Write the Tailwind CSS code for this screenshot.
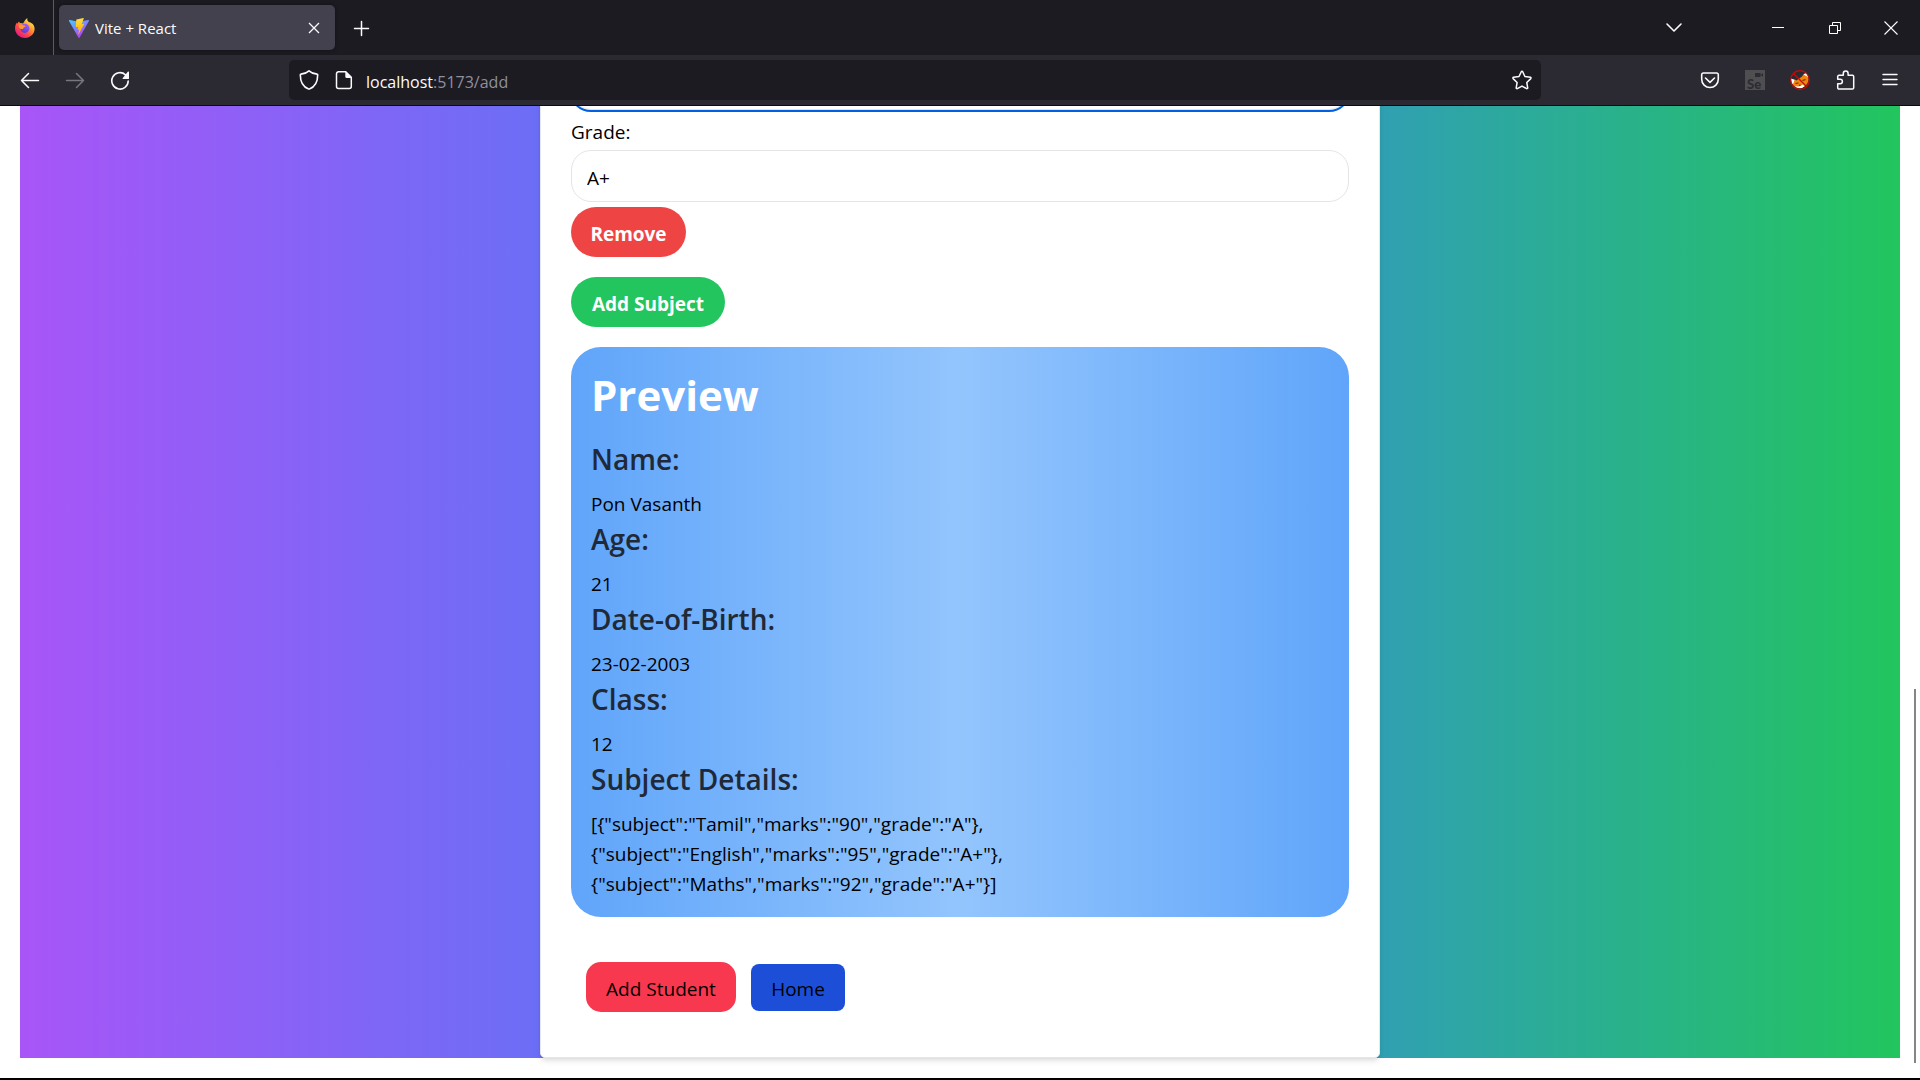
<!DOCTYPE html>
<html lang="en">
<head>
<meta charset="utf-8">
<meta name="viewport" content="width=device-width, initial-scale=1">
<title>Vite + React</title>
<script src="https://cdn.jsdelivr.net/npm/@tailwindcss/browser@4"></script>
</head>
<body class="flex h-screen flex-col overflow-hidden border-b-2 border-black bg-white font-['Open_Sans','Noto_Sans',sans-serif] text-[19px] leading-[30px] text-black">

<!-- Tab strip -->
<header class="shrink-0 text-[#fbfbfe]">
  <div class="flex h-[55px] items-center bg-[#1c1b22]">
    <div class="flex h-full w-[54px] items-center border-r border-[#5b5b66] pl-[15px]">
      <svg class="size-5" viewBox="0 0 20 20" aria-hidden="true">
        <defs>
          <linearGradient id="ffBody" x1="0.85" y1="0.1" x2="0.2" y2="0.95"><stop offset="0" stop-color="#fff44f"/><stop offset=".35" stop-color="#ff9a2a"/><stop offset=".65" stop-color="#ff4a4a"/><stop offset="1" stop-color="#e31587"/></linearGradient>
          <linearGradient id="ffGlobe" x1="0.7" y1="0" x2="0.3" y2="1"><stop offset="0" stop-color="#a45cff"/><stop offset="1" stop-color="#5a3bd0"/></linearGradient>
        </defs>
        <path fill="url(#ffBody)" d="M12.500 0c-.6 1.600-.2 2.600.8 3.600 1.400 1.100 4.500 1.400 5.700 4.400C21.300 14 16.500 20 10 20 4.500 20 0 15.700 0 10.300 0 8 .8 6 2 4.500c.1.600.2 1 .5 1.300.3-1 .8-1.800 1.600-2.400.1.800.5 1.300 1 1.600 1-.2 2.300 0 3 .6C9.500 3 10.500 1 12.500 0z"/>
        <circle cx="9.800" cy="10.300" r="4.600" fill="url(#ffGlobe)"/>
        <path fill="#ff9a2a" d="M4 6.800c2-.8 3.600-.3 4.600.7 1.300 0 1.900.2 1.900.8-.2.700-1.800 1-2.100 1.600-.2 1.300-1.500 1.300-2.600 1.100C4.300 10.500 3.500 8.500 4 6.800z"/>
      </svg>
    </div>
    <div class="ml-[5px] flex h-[45px] w-[276px] items-center rounded-[5px] bg-[#42414d] pr-3 pl-[10px] shadow-[0_0_4px_rgba(0,0,0,0.4)]">
      <svg class="size-5 shrink-0" viewBox="0 0 20 20" aria-hidden="true">
        <defs>
          <linearGradient id="viteV" x1="0" y1="0" x2=".6" y2="1"><stop offset="0" stop-color="#41d1ff"/><stop offset="1" stop-color="#bd34fe"/></linearGradient>
          <linearGradient id="viteBolt" x1=".4" y1="0" x2=".5" y2="1"><stop offset="0" stop-color="#ffea83"/><stop offset=".1" stop-color="#ffdd35"/><stop offset="1" stop-color="#ffa800"/></linearGradient>
        </defs>
        <path fill="url(#viteV)" d="M19.900 3 10.500 19.700a.6.600 0 0 1-1 0L0 3a.6.600 0 0 1 .6-.9l9.400 1.700 9.300-1.700a.6.600 0 0 1 .6.900z"/>
        <path fill="url(#viteBolt)" d="m14.500 0-6.900 1.400-.3.300-.5 7.200.4.300 2-.4-.6 2.800.4.400 1.200-.4-1 4.500c0 .3.400.5.500.2l5.300-10.100c.1-.3-.1-.5-.4-.4l-2 .4 2.200-5.800z"/>
      </svg>
      <span class="ml-[6px] flex-1 truncate text-[15px]">Vite + React</span>
      <button type="button" aria-label="Close tab" class="size-[18px]">
        <svg class="size-[18px]" viewBox="0 0 18 18" fill="none" stroke="currentColor" stroke-width="1.300"><path d="m4 4 10 10M14 4 4 14"/></svg>
      </button>
    </div>
    <button type="button" aria-label="New tab" class="ml-4 size-5">
      <svg class="size-5" viewBox="0 0 20 20" fill="none" stroke="currentColor" stroke-width="1.500" stroke-linecap="round"><path d="M10.500 3.500v14M3.500 10.500h14"/></svg>
    </button>
    <div class="ml-auto flex items-center">
      <button type="button" aria-label="List all tabs" class="mr-[84px] size-5">
        <svg class="size-5" viewBox="0 0 20 20" fill="none" stroke="currentColor" stroke-width="1.600" stroke-linecap="round" stroke-linejoin="round"><path d="m3 6 7 7 7-7"/></svg>
      </button>
      <button type="button" aria-label="Minimize" class="mr-[37px] size-5">
        <svg class="size-5" viewBox="0 0 20 20" stroke="#fff" stroke-width="1"><path d="M4 9.500h12"/></svg>
      </button>
      <button type="button" aria-label="Restore" class="mr-[36px] size-5">
        <svg class="size-5" viewBox="0 0 20 20" fill="none" stroke="#fff" stroke-width="1"><path d="M4.500 7.500h8v8h-8zM7.500 7.500v-3h8v8h-3"/></svg>
      </button>
      <button type="button" aria-label="Close" class="mr-[19px] size-5">
        <svg class="size-5" viewBox="0 0 20 20" stroke="currentColor" stroke-width="1.100"><path d="m3.500 3.500 13 13M16.500 3.500l-13 13"/></svg>
      </button>
    </div>
  </div>

  <!-- Navigation toolbar -->
  <div class="flex h-[51px] items-center border-b border-[#0c0c0d] bg-[#2b2a33]">
    <button type="button" aria-label="Back" class="ml-5 size-5">
      <svg class="size-5" viewBox="0 0 20 20" fill="none" stroke="currentColor" stroke-width="1.500" stroke-linecap="round" stroke-linejoin="round"><path d="M18.500 10.500h-17M8.500 3.500l-7 7 7 7"/></svg>
    </button>
    <button type="button" aria-label="Forward" disabled class="ml-[25px] size-5 text-[#77767e]">
      <svg class="size-5" viewBox="0 0 20 20" fill="none" stroke="currentColor" stroke-width="1.500" stroke-linecap="round" stroke-linejoin="round"><path d="M1.500 10.500h17M11.500 3.500l7 7-7 7"/></svg>
    </button>
    <button type="button" aria-label="Reload" class="ml-[25px] size-5">
      <svg class="size-5" viewBox="0 0 20 20" fill="none" stroke="currentColor" stroke-width="1.600" stroke-linecap="round"><path d="M18.200 11a8.200 8.200 0 1 1-2.700-6.200"/><path fill="currentColor" stroke="none" d="M19 2v6.400a.6.600 0 0 1-.6.600h-5.200c-.5 0-.8-.6-.4-1L18 1.600c.4-.4 1-.1 1 .4z"/></svg>
    </button>
    <div class="mr-[159px] ml-[159px] flex h-10 flex-1 items-center rounded-[5px] bg-[#1c1b22] px-[9px]">
      <svg class="size-[22px] shrink-0" viewBox="0 0 22 22" fill="none" stroke="currentColor" stroke-width="1.600" stroke-linejoin="round" aria-hidden="true"><path d="M11 1.800c2 1.900 4.800 3 8 3.300.4 0 .7.300.7.700 0 6.300-2.100 12-8.300 14.200a1.200 1.200 0 0 1-.8 0C4.400 17.800 2.300 12.100 2.300 5.800c0-.4.300-.7.700-.7 3.200-.3 6-1.400 8-3.300z"/></svg>
      <svg class="ml-[14px] size-5 shrink-0" viewBox="0 0 20 20" fill="none" stroke="currentColor" stroke-width="1.500" stroke-linejoin="round" aria-hidden="true"><path d="M4.500 1.800h7.300L17.300 7.300v9.200a2 2 0 0 1-2 2H4.500a2 2 0 0 1-2-2V3.800a2 2 0 0 1 2-2z"/><path fill="currentColor" stroke="none" d="M11.300 1.500 17.700 8h-4.900a1.500 1.500 0 0 1-1.500-1.500z"/></svg>
      <a href="#" class="ml-3 flex-1 pt-1 text-base leading-6 text-[#8f8f9d]" aria-label="Page address"><span class="text-[#fbfbfe]">localhost</span>:5173/add</a>
      <button type="button" aria-label="Bookmark this page" class="size-5">
        <svg class="size-5" viewBox="0 0 20 20" fill="none" stroke="currentColor" stroke-width="1.500" stroke-linejoin="round"><path d="M9.300 1.700a.8.800 0 0 1 1.400 0l2.200 4.800 5.500.8a.8.800 0 0 1 .4 1.300l-4 3.900.9 5.300a.8.800 0 0 1-1.100.8L10 16.100l-4.700 2.500a.8.800 0 0 1-1.100-.8l.9-5.300-4-3.900a.8.800 0 0 1 .4-1.300l5.500-.8z"/></svg>
      </button>
    </div>
    <button type="button" aria-label="Save to Pocket" class="size-5">
      <svg class="size-5" viewBox="0 0 20 20" fill="none" stroke="currentColor" stroke-width="1.600" stroke-linecap="round" stroke-linejoin="round"><path d="M3.300 3h13.400a1.600 1.600 0 0 1 1.600 1.600v4.600a8.300 8.300 0 0 1-16.600 0V4.600A1.600 1.600 0 0 1 3.300 3z"/><path d="m5.500 8 4.500 4.300L14.500 8"/></svg>
    </button>
    <button type="button" aria-label="Selenium IDE" class="relative ml-[25px] size-5 bg-[#4f4f51] text-[#2d2c33]">
      <span class="absolute bottom-0 left-[2px] font-['Lato',sans-serif] text-[13px] leading-3 font-black">Se</span>
      <svg class="absolute top-[3px] right-[2px] h-1 w-2" viewBox="0 0 8 4" fill="currentColor"><path d="M0 0h5.500v4H0zM5.500 2 8 .3v3.400z"/></svg>
    </button>
    <button type="button" aria-label="Wappalyzer" class="ml-[25px] size-5">
      <svg class="size-5" viewBox="0 0 20 20"><path fill="#f0840f" d="M1 9c2 0 4 .3 5.500 1.500L12 6.500C13 4.500 14.500 3.300 16.500 3c2 2.500 2.500 6 1.500 9-1.500 4-5.500 6.500-10 6C4.500 17.500 1.500 14 1 9z"/><path fill="#fff" d="M1 8.500 4.500 10l-1.500 4.500C1.500 13 1 10.500 1 8.500zM13.500 4.500l3-1.800 1.500 4.300zM5 16c3 .8 5.500.5 8-1.500l1.500 1.800C12 18.800 8 19 5 16z"/><path fill="none" stroke="#5b2b12" stroke-width="1.100" d="m5.500 13.500 3-.5M12.500 10.500l3-1M9 15.500l1.500-.5"/><circle cx="10" cy="10" r="9.300" fill="none" stroke="#c80a0a" stroke-width="1.200"/><path stroke="#c80a0a" stroke-width="1.200" d="m3.500 3.500 13 13"/></svg>
    </button>
    <button type="button" aria-label="Extensions" class="ml-[26px] size-5">
      <svg class="size-5" viewBox="0 0 20 20" fill="none" stroke="currentColor" stroke-width="1.500" stroke-linejoin="round"><path d="M7.300 5.300V3.500a2.400 2.400 0 0 1 4.800 0v1.800h4.300a1.300 1.300 0 0 1 1.300 1.300v11.100a1.300 1.300 0 0 1-1.300 1.300H3a1.300 1.300 0 0 1-1.300-1.300v-4h2.500a2.200 2.200 0 0 0 0-4.400H1.700v-3A1.300 1.300 0 0 1 3 5.300z"/></svg>
    </button>
    <button type="button" aria-label="Open application menu" class="mr-5 ml-6 size-5">
      <svg class="size-5" viewBox="0 0 20 20" stroke="currentColor" stroke-width="1.400" stroke-linecap="round"><path d="M3 4.500h14M3 9.500h14M3 14.500h14"/></svg>
    </button>
  </div>
</header>

<!-- Page, scrolled to its end -->
<main class="relative flex min-h-0 flex-1 flex-col justify-end overflow-hidden px-5 pb-5">
  <div class="flex shrink-0 justify-center bg-[linear-gradient(to_right,#a855f7,#3b82f6,#22c55e)]">
    <form class="flex w-full max-w-[840px] flex-col items-start rounded-[5px] border border-gray-200 bg-white px-[30px] pt-5 pb-[45px] shadow-md">
      <input type="text" aria-label="Marks" class="h-[52px] w-full rounded-[20px] border border-[#e5e5e5] px-[15px] outline-2 outline-[#0060df]">
      <label for="grade" class="mt-[7px]">Grade:</label>
      <input id="grade" type="text" value="A+" class="mt-[3px] h-[52px] w-full rounded-[20px] border border-[#e5e5e5] bg-white px-[15px] pt-1">
      <button type="button" class="mt-[5px] h-[50px] w-[115px] rounded-full bg-[#ef4444] pt-1 font-bold text-white">Remove</button>
      <button type="button" class="mt-5 h-[50px] w-[154px] rounded-full bg-[#22c55e] pt-1 font-bold text-white">Add Subject</button>

      <section class="mt-5 w-full rounded-[30px] bg-[linear-gradient(to_right,#60a5fa,#93c5fd,#60a5fa)] px-5 pt-[22px] pb-[18px]">
        <h2 class="mb-[18px] text-[42px] leading-[52px] font-bold text-white">Preview</h2>
        <h3 class="mb-[10px] text-[28px] leading-10 font-semibold text-[#1f2937]">Name:</h3>
        <p>Pon Vasanth</p>
        <h3 class="mb-[10px] text-[28px] leading-10 font-semibold text-[#1f2937]">Age:</h3>
        <p>21</p>
        <h3 class="mb-[10px] text-[28px] leading-10 font-semibold text-[#1f2937]">Date-of-Birth:</h3>
        <p>23-02-2003</p>
        <h3 class="mb-[10px] text-[28px] leading-10 font-semibold text-[#1f2937]">Class:</h3>
        <p>12</p>
        <h3 class="mb-[10px] text-[28px] leading-10 font-semibold text-[#1f2937]">Subject Details:</h3>
        <p>[{"subject":"Tamil","marks":"90","grade":"A"},<br>{"subject":"English","marks":"95","grade":"A+"},<br>{"subject":"Maths","marks":"92","grade":"A+"}]</p>
      </section>

      <div class="mt-[45px] ml-[15px] flex items-center gap-[15px]">
        <button type="submit" class="h-[50px] w-[150px] rounded-[15px] bg-[#f7384f] pt-1">Add Student</button>
        <button type="button" class="h-[47px] w-[94px] rounded-[8px] bg-[#1d4ed8] pt-1">Home</button>
      </div>
    </form>
  </div>
  <div class="absolute right-1 bottom-[15px] h-[374px] w-[2px] bg-[#858585]" aria-hidden="true"></div>
</main>
</body>
</html>
